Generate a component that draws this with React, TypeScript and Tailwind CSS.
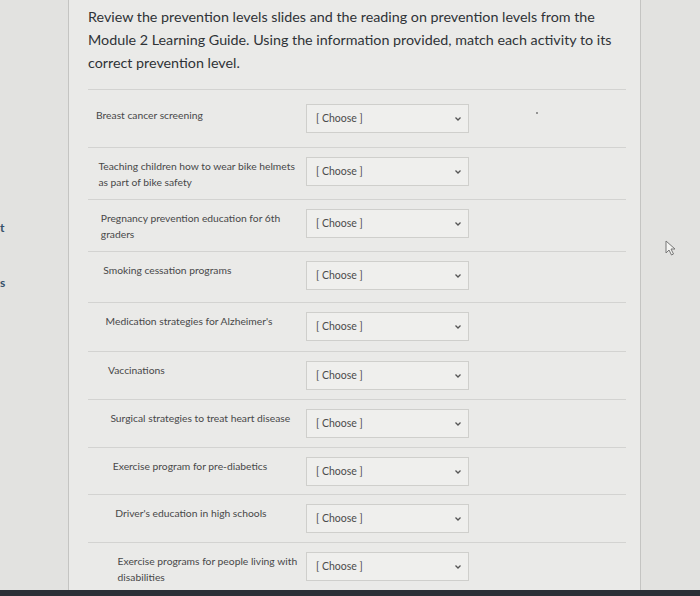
import React from 'react';

interface Activity {
  lines: string[];
  height: number;
}

const activities: Activity[] = [
  { lines: ['Breast cancer screening'], height: 58 },
  { lines: ['Teaching children how to wear bike helmets', 'as part of bike safety'], height: 52 },
  { lines: ['Pregnancy prevention education for 6th', 'graders'], height: 52 },
  { lines: ['Smoking cessation programs'], height: 51 },
  { lines: ["Medication strategies for Alzheimer's"], height: 49 },
  { lines: ['Vaccinations'], height: 48 },
  { lines: ['Surgical strategies to treat heart disease'], height: 48 },
  { lines: ['Exercise program for pre-diabetics'], height: 47 },
  { lines: ["Driver's education in high schools"], height: 48 },
  { lines: ['Exercise programs for people living with', 'disabilities'], height: 47 },
];

const ChooseSelect: React.FC<{ top: number }> = ({ top }) => (
  <div
    className="flex h-[29px] w-[163px] shrink-0 items-center justify-between border border-[#cfcfcc] bg-[#efefed] pl-[9px] pr-[6px] text-[10.5px] text-[#4b4b4b]"
    style={{ marginTop: top }}
  >
    <span>[ Choose ]</span>
    <svg width="8" height="6" viewBox="0 0 8 6" fill="none">
      <path d="M1.5 1.5 L4 4 L6.5 1.5" stroke="#555" strokeWidth="1.3" />
    </svg>
  </div>
);

const App: React.FC = () => {
  return (
    <div
      className="relative flex h-[596px] w-[700px] overflow-hidden bg-[#e2e2e0]"
      style={{ fontFamily: 'Lato, "Open Sans", sans-serif' }}
    >
      <div className="flex w-[68px] flex-col pt-[222px] text-[12px] font-bold leading-none text-[#34506a]">
        <span className="h-[55px]">t</span>
        <span>s</span>
      </div>

      <div className="flex h-[590px] w-[573px] flex-col border-x border-[#c4c4c2] bg-[#eaeae8]">
        <p className="pl-[19px] pr-[20px] pt-[5px] text-[14.3px] leading-[23px] text-[#2f3337]">
          Review the prevention levels slides and the reading on prevention levels from the
          Module 2 Learning Guide. Using the information provided, match each activity to its
          correct prevention level.
        </p>

        <div className="ml-[19px] mr-[14px] mt-[15px] flex flex-col">
          {activities.map((a, i) => (
            <div
              key={i}
              className="relative flex items-start border-t border-[#d3d3d1]"
              style={{ height: a.height }}
            >
              <div
                className="w-[218px] shrink-0 text-[10.3px] leading-[16px] text-[#484848]"
                style={{ paddingLeft: 8 + i * 2.4, paddingTop: i === 0 ? 17 : 10 }}
              >
                {a.lines.map((l, j) => (
                  <div key={j} className="whitespace-nowrap">
                    {l}
                  </div>
                ))}
              </div>
              <ChooseSelect top={i === 0 ? 14 : 9} />
              {i === 0 && (
                <span className="absolute left-[448px] top-[22px] h-[2px] w-[2px] rounded-full bg-[#777]" />
              )}
            </div>
          ))}
        </div>
      </div>

      <div className="relative flex-1">
        <svg className="absolute left-[24px] top-[240px]" width="12" height="16" viewBox="0 0 12 16">
          <path d="M1 1 L1 13 L4 10 L6.5 15 L8.5 14 L6 9 L10 9 Z" fill="#f4f4f2" stroke="#777" strokeWidth="1" />
        </svg>
      </div>

      <div className="absolute bottom-0 left-0 h-[6px] w-full bg-[#2b3037]" />
    </div>
  );
};

export default App;
